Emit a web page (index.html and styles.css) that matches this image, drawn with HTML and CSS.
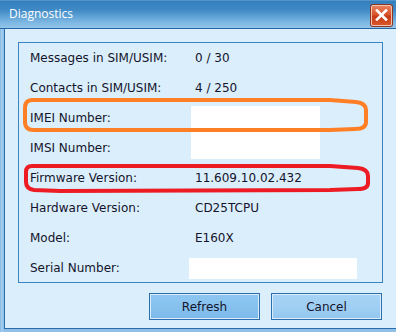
FILE: index.html
```html
<!DOCTYPE html>
<html>
  <head>
    <meta charset="UTF-8" />
    <title>Diagnostics</title>
    <link rel="stylesheet" href="styles.css">
  </head>
  <body>
    <div class="window">
      <div class="titlebar">
        <span class="title">Diagnostics</span>
        <div class="close-btn">
          <svg width="13" height="12" viewBox="0 0 13 12">
            <path d="M2 1.5 L11 10.5 M11 1.5 L2 10.5" stroke="#fff" stroke-width="2.6" stroke-linecap="square" />
          </svg>
        </div>
      </div>

      <div class="client">
        <div class="group">
          <div class="row">
            <span class="label">Messages in SIM/USIM:</span>
            <span class="value">0 / 30</span>
          </div>
          <div class="row">
            <span class="label">Contacts in SIM/USIM:</span>
            <span class="value">4 / 250</span>
          </div>
          <div class="row">
            <span class="label">IMEI Number:</span>
            <span class="field field-imei"></span>
          </div>
          <div class="row">
            <span class="label">IMSI Number:</span>
            <span class="field field-imsi"></span>
          </div>
          <div class="row">
            <span class="label">Firmware Version:</span>
            <span class="value">11.609.10.02.432</span>
          </div>
          <div class="row">
            <span class="label">Hardware Version:</span>
            <span class="value">CD25TCPU</span>
          </div>
          <div class="row">
            <span class="label">Model:</span>
            <span class="value">E160X</span>
          </div>
          <div class="row">
            <span class="label">Serial Number:</span>
            <span class="field field-serial"></span>
          </div>
        </div>

        <div class="buttons">
          <button class="btn btn-default">Refresh</button>
          <button class="btn">Cancel</button>
        </div>
      </div>

      <!-- hand drawn highlight marks -->
      <svg class="marks" width="396" height="332" viewBox="0 0 396 332">
        <path class="mark-orange" d="M32 100 L330 100 L356 102 Q366 103 366 110 L366 122 Q366 129 355 129 L330 130 L34 130 Q25 130 25 122 L25 108 Q25 100 32 100 Z" />
        <path class="mark-red" d="M32 166 L330 166 L358 168 Q368 169 368 176 L368 183 Q368 189 358 189 L330 190 L60 191 L34 190 Q26 189 26 182 L26 172 Q26 166 32 166 Z" />
      </svg>
    </div>
  </body>
</html>
```

FILE: styles.css
```css
body {
  margin: 0;
  font-family: Tahoma, "DejaVu Sans", sans-serif;
  background: #dbeefb;
}

.window {
  position: relative;
  width: 396px;
  height: 332px;
  overflow: hidden;
  display: flex;
  flex-direction: column;
  background: linear-gradient(90deg, #6fa9da 0px, #a6d0f0 1px, #8fc1e8 4px);
}

.titlebar {
  height: 28px;
  flex: none;
  display: flex;
  align-items: center;
  padding-left: 9px;
  padding-right: 4px;
  background: linear-gradient(180deg, #6ea8d9 0px, #357fbe 1px, #3f8ac6 10px, #7bb6e2 22px, #92c6ea 28px);
  border-bottom: 1px solid #2766a6;
}

.title {
  color: #ffffff;
  font-family: "Open Sans", "Liberation Sans", sans-serif;
  font-size: 12px;
  margin-top: -1px;
}

.close-btn {
  margin-left: auto;
  width: 19px;
  height: 19px;
  margin-top: 2px;
  display: flex;
  align-items: center;
  justify-content: center;
  border: 1px solid #f3c2ae;
  border-radius: 2px;
  background: linear-gradient(180deg, #e9805d 0%, #d8532b 45%, #c63c18 55%, #d9542a 100%);
  box-shadow: 0 0 0 1px #8e3620;
}

.client {
  flex: 1;
  margin-left: 4px;
  margin-bottom: 3px;
  background: #dbeefb;
  border-left: 1px solid #2b6cab;
  border-bottom: 1px solid #2b6cab;
  display: flex;
  flex-direction: column;
}

.group {
  margin: 13px 0 0 13px;
  width: 363px;
  height: 239px;
  border: 1px solid #3b83c2;
  display: grid;
  grid-template-rows: repeat(8, 30px);
  font-size: 12px;
  color: #14142c;
}

.row {
  display: grid;
  grid-template-columns: 170px 1fr;
  align-items: center;
}

.label {
  padding-left: 11px;
}

.value {
  padding-left: 6px;
}

.field {
  display: block;
  background: #ffffff;
}

.field-imei {
  width: 129px;
  height: 27px;
  margin-left: 2px;
  align-self: end;
}

.field-imsi {
  width: 129px;
  height: 26px;
  margin-left: 2px;
  align-self: start;
}

.field-serial {
  width: 168px;
  height: 21px;
}

.buttons {
  display: flex;
  justify-content: flex-end;
  gap: 11px;
  width: 377px;
  margin-top: 10px;
}

.btn {
  width: 111px;
  height: 27px;
  font-family: Tahoma, "DejaVu Sans", sans-serif;
  font-size: 12px;
  color: #14142c;
  border: 1px solid #2d6fae;
  box-shadow: inset 0 0 0 1px #d9ecfa;
  background: linear-gradient(180deg, #a6d3f5 0%, #a0cff3 50%, #93c7ef 100%);
  padding: 0;
}

.btn-default {
  background: linear-gradient(180deg, #8ec6f0 0%, #86c1ee 50%, #7cb9ea 100%);
}

.marks {
  position: absolute;
  left: 0;
  top: 0;
  pointer-events: none;
}

.marks path {
  fill: none;
  stroke-width: 4;
  stroke-linejoin: round;
}

.mark-orange {
  stroke: #ff7f27;
}

.mark-red {
  stroke: #ed1c24;
}
```
